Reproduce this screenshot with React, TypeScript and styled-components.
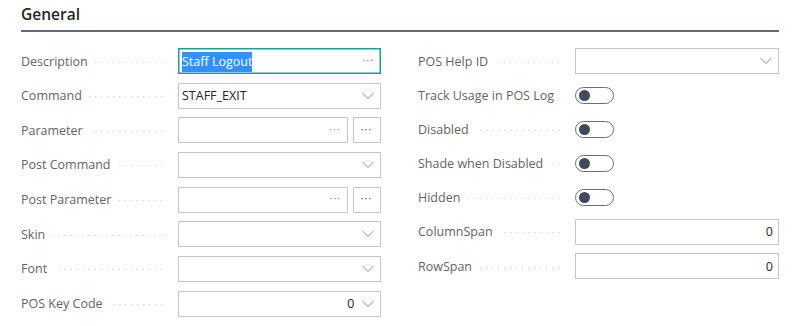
import React from "react";
import styled, { createGlobalStyle } from "styled-components";

const Global = createGlobalStyle`
  html, body { margin: 0; padding: 0; background: #ffffff; }
  body { font-family: "Open Sans", "Noto Sans", sans-serif; }
`;

const Page = styled.div`
  width: 800px;
  height: 326px;
  box-sizing: border-box;
  padding: 0 21px;
  background: #ffffff;
  overflow: hidden;
`;

const Header = styled.div`
  height: 30px;
  border-bottom: 2px solid #5f6b7e;
  box-sizing: content-box;
  display: flex;
  align-items: flex-end;
`;

const Title = styled.h2`
  margin: 0 0 6px 0;
  font-size: 15.5px;
  line-height: 20px;
  font-weight: 600;
  color: #262626;
`;

const Columns = styled.div`
  display: grid;
  grid-template-columns: 360px 361px;
  column-gap: 37px;
  margin-top: 16px;
`;

const Column = styled.div<{ $gap: number }>`
  display: flex;
  flex-direction: column;
  gap: ${(p) => p.$gap}px;
`;

const Row = styled.div`
  display: grid;
  grid-template-columns: 157px 1fr;
  height: 26px;
  align-items: center;
`;

const LabelCell = styled.div`
  display: flex;
  align-items: center;
  min-width: 0;
`;

const LabelText = styled.span`
  font-size: 12.5px;
  color: #646464;
  white-space: nowrap;
`;

const Leader = styled.span`
  flex: 1;
  height: 1px;
  margin: 2px 11px 0 7px;
  background-image: linear-gradient(to right, #c2c2c2 1px, transparent 1px);
  background-size: 6px 1px;
  background-repeat: repeat-x;
  background-position: right center;
`;

const ControlCell = styled.div`
  display: flex;
  align-items: center;
  gap: 5px;
  height: 26px;
`;

const Box = styled.div<{ $focused?: boolean }>`
  flex: 1;
  height: 26px;
  box-sizing: border-box;
  border: 1px solid ${(p) => (p.$focused ? "#1f9c9c" : "#c6c6c6")};
  box-shadow: ${(p) => (p.$focused ? "inset 0 0 0 0.5px #1f9c9c" : "none")};
  display: flex;
  align-items: center;
  padding: 0 5px 0 3px;
  background: #fff;
  font-size: 12.5px;
  color: #262626;
`;

const Value = styled.span<{ $right?: boolean }>`
  flex: 1;
  text-align: ${(p) => (p.$right ? "right" : "left")};
  white-space: nowrap;
`;

const Selected = styled.span`
  background: #3390ff;
  color: #ffffff;
  padding: 1px 0 2px 0;
`;

const Ellipsis = styled.span<{ $dark?: boolean }>`
  font-size: 11px;
  letter-spacing: 1px;
  color: ${(p) => (p.$dark ? "#444" : "#8a8a8a")};
  line-height: 1;
  margin-top: -4px;
  margin-right: 1px;
`;

const AssistButton = styled.div`
  width: 28px;
  height: 26px;
  box-sizing: border-box;
  border: 1px solid #c6c6c6;
  display: flex;
  align-items: center;
  justify-content: center;
  background: #fff;
`;

const Toggle = styled.div`
  width: 39px;
  height: 17px;
  box-sizing: border-box;
  border: 1.5px solid #6f6f6f;
  border-radius: 9px;
  display: flex;
  align-items: center;
  padding-left: 3px;
`;

const Knob = styled.span`
  width: 11px;
  height: 11px;
  border-radius: 50%;
  background: #3f4a5c;
`;

const Chevron = () => (
  <svg width="14" height="8" viewBox="0 0 14 8" style={{ flexShrink: 0 }}>
    <path d="M1.5 1 L7 6.5 L12.5 1" fill="none" stroke="#8c8c8c" strokeWidth="1" />
  </svg>
);

const Label = ({ text }: { text: string }) => (
  <LabelCell>
    <LabelText>{text}</LabelText>
    <Leader />
  </LabelCell>
);

type Kind = "text" | "select" | "lookup" | "toggle" | "number";

interface FieldDef {
  label: string;
  kind: Kind;
  value?: string;
  focused?: boolean;
}

const left: FieldDef[] = [
  { label: "Description", kind: "text", value: "Staff Logout", focused: true },
  { label: "Command", kind: "select", value: "STAFF_EXIT" },
  { label: "Parameter", kind: "lookup" },
  { label: "Post Command", kind: "select" },
  { label: "Post Parameter", kind: "lookup" },
  { label: "Skin", kind: "select" },
  { label: "Font", kind: "select" },
  { label: "POS Key Code", kind: "select", value: "0" },
];

const right: FieldDef[] = [
  { label: "POS Help ID", kind: "select" },
  { label: "Track Usage in POS Log", kind: "toggle" },
  { label: "Disabled", kind: "toggle" },
  { label: "Shade when Disabled", kind: "toggle" },
  { label: "Hidden", kind: "toggle" },
  { label: "ColumnSpan", kind: "number", value: "0" },
  { label: "RowSpan", kind: "number", value: "0" },
];

const Control = ({ f }: { f: FieldDef }) => {
  switch (f.kind) {
    case "text":
      return (
        <Box $focused={f.focused}>
          <Value>{f.focused ? <Selected>{f.value}</Selected> : f.value}</Value>
          <Ellipsis>···</Ellipsis>
        </Box>
      );
    case "select":
      return (
        <Box>
          <Value $right={f.value === "0"}>
            {f.value}
            {f.value === "0" ? "\u00a0\u00a0" : ""}
          </Value>
          <Chevron />
        </Box>
      );
    case "lookup":
      return (
        <>
          <Box>
            <Value />
            <Ellipsis>···</Ellipsis>
          </Box>
          <AssistButton>
            <Ellipsis $dark>···</Ellipsis>
          </AssistButton>
        </>
      );
    case "toggle":
      return (
        <Toggle>
          <Knob />
        </Toggle>
      );
    case "number":
      return (
        <Box>
          <Value $right>{f.value}</Value>
        </Box>
      );
  }
};

const Field = ({ f }: { f: FieldDef }) => (
  <Row>
    <Label text={f.label} />
    <ControlCell>
      <Control f={f} />
    </ControlCell>
  </Row>
);

export default function App() {
  return (
    <Page>
      <Global />
      <Header>
        <Title>General</Title>
      </Header>
      <Columns>
        <Column $gap={8.67}>
          {left.map((f) => (
            <Field key={f.label} f={f} />
          ))}
        </Column>
        <Column $gap={8.2}>
          {right.map((f) => (
            <Field key={f.label} f={f} />
          ))}
        </Column>
      </Columns>
    </Page>
  );
}
